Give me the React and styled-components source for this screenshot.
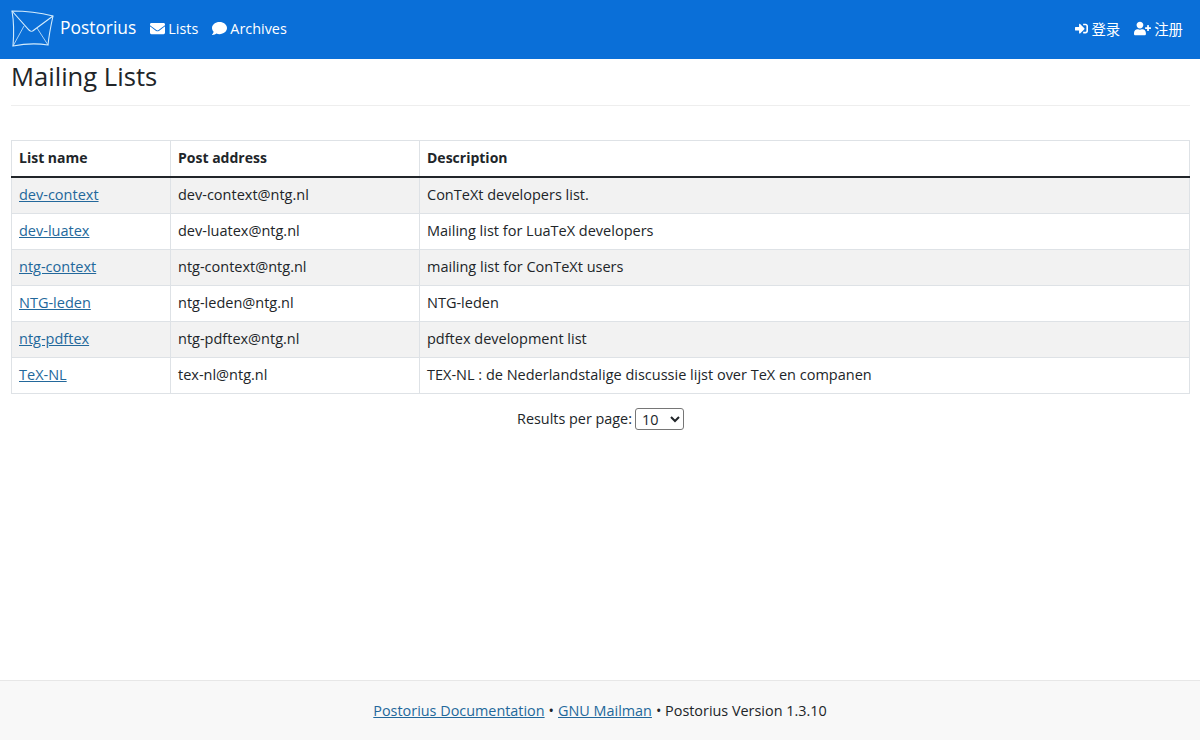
import React from "react"
import styled, { createGlobalStyle } from "styled-components"
import { FaEnvelope, FaComment, FaSignInAlt, FaUserPlus } from "react-icons/fa"

const GlobalStyle = createGlobalStyle`
  *, *::before, *::after {
    box-sizing: border-box;
  }
  html, body {
    margin: 0;
    height: 100%;
  }
  body {
    font-family: "Open Sans", "Noto Sans CJK SC", sans-serif;
    font-size: 14.4px;
    color: #212529;
    background: #fff;
  }
  #root {
    height: 100%;
  }
`

const Page = styled.div`
  display: flex;
  flex-direction: column;
  height: 740px;
  overflow: hidden;
`

const Navbar = styled.nav`
  display: flex;
  align-items: center;
  justify-content: space-between;
  height: 59px;
  padding: 0 17px 3px 11px;
  background: #0a6fd8;
  color: #fff;
`

const NavGroup = styled.div`
  display: flex;
  align-items: center;
  gap: 14px;
`

const Brand = styled.a`
  display: flex;
  align-items: center;
  gap: 6px;
  font-size: 17.4px;
  color: #fff;

  span {
    margin-bottom: 2px;
  }
`

const NavLink = styled.a`
  display: flex;
  align-items: center;
  gap: 3px;
  color: #fff;

  svg {
    width: ${props => props.$icon || 15}px;
    height: ${props => props.$icon || 15}px;
  }
`

const Main = styled.main`
  flex: 1;
  padding: 0 10px 0 11px;
`

const PageHeader = styled.div`
  padding: 0 0 8px;
  margin-bottom: 34px;
  border-bottom: 1px solid #eee;
`

const Title = styled.h1`
  margin: 0;
  height: 38px;
  font-size: 25.6px;
  font-weight: 400;
  line-height: 36px;
`

const Table = styled.table`
  width: 100%;
  table-layout: fixed;
  border-collapse: collapse;
`

const HeadCell = styled.th`
  height: 36px;
  padding: 0 7px 1px;
  border: 1px solid #dee2e6;
  border-bottom: 2px solid #212529;
  font-size: 14px;
  font-weight: 700;
  text-align: left;
  width: ${props => props.$width || "auto"};
`

const Cell = styled.td`
  height: 36px;
  padding: 0 7px 2px 7px;
  border: 1px solid #dee2e6;
  font-size: 14.5px;
`

const Row = styled.tr`
  background: ${props => (props.$odd ? "#f2f2f2" : "#fff")};

  &:first-child ${Cell} {
    height: 37px;
  }
`

const TextLink = styled.a`
  color: #23689b;
  text-decoration: underline;
`

const Pager = styled.div`
  display: flex;
  align-items: center;
  justify-content: center;
  gap: 3px;
  margin-top: 14px;
`

const PagerLabel = styled.span`
  margin-bottom: 2px;
`

const PerPage = styled.select`
  width: 49px;
  height: 22px;
  padding: 0 0 0 2px;
  font: inherit;
  color: #212529;
  background: #fff;
  border: 1px solid #767676;
  border-radius: 3px;
`

const Footer = styled.footer`
  display: flex;
  align-items: center;
  justify-content: center;
  gap: 4px;
  height: 60px;
  background: #f8f8f8;
  border-top: 1px solid #e7e7e7;
`

const Logo = () => (
  <svg width="43" height="37" viewBox="0 0 43 37" fill="none" stroke="#d4ecfc" strokeWidth="1.1">
    <path d="M1 1 C14 1 30 3 42 6 C40 15 38 25 37 35 C25 33 12 34 2 36 C3 24 3 12 1 1 Z" />
    <path d="M1 1 L18 20 C20 22 21 22 23 20 L42 6" />
    <path d="M2 36 L13 16 M37 35 L26 18" strokeWidth="0.8" />
  </svg>
)

const lists = [
  ["dev-context", "dev-context@ntg.nl", "ConTeXt developers list."],
  ["dev-luatex", "dev-luatex@ntg.nl", "Mailing list for LuaTeX developers"],
  ["ntg-context", "ntg-context@ntg.nl", "mailing list for ConTeXt users"],
  ["NTG-leden", "ntg-leden@ntg.nl", "NTG-leden"],
  ["ntg-pdftex", "ntg-pdftex@ntg.nl", "pdftex development list"],
  ["TeX-NL", "tex-nl@ntg.nl", "TEX-NL : de Nederlandstalige discussie lijst over TeX en companen"],
]

export default function App() {
  return (
    <Page>
      <GlobalStyle />
      <Navbar>
        <NavGroup>
          <Brand>
            <Logo />
            <span>Postorius</span>
          </Brand>
          <NavLink>
            <FaEnvelope />
            Lists
          </NavLink>
          <NavLink>
            <FaComment />
            Archives
          </NavLink>
        </NavGroup>
        <NavGroup>
          <NavLink $icon={13}>
            <FaSignInAlt />
            登录
          </NavLink>
          <NavLink $icon={17}>
            <FaUserPlus />
            注册
          </NavLink>
        </NavGroup>
      </Navbar>
      <Main>
        <PageHeader>
          <Title>Mailing Lists</Title>
        </PageHeader>
        <Table>
          <thead>
            <tr>
              <HeadCell $width="159px">List name</HeadCell>
              <HeadCell $width="249px">Post address</HeadCell>
              <HeadCell>Description</HeadCell>
            </tr>
          </thead>
          <tbody>
            {lists.map((list, i) => (
              <Row key={list[0]} $odd={i % 2 === 0}>
                <Cell>
                  <TextLink href="#">{list[0]}</TextLink>
                </Cell>
                <Cell>{list[1]}</Cell>
                <Cell>{list[2]}</Cell>
              </Row>
            ))}
          </tbody>
        </Table>
        <Pager>
          <PagerLabel>Results per page:</PagerLabel>
          <PerPage defaultValue="10">
            <option>10</option>
            <option>25</option>
            <option>50</option>
          </PerPage>
        </Pager>
      </Main>
      <Footer>
        <TextLink href="#">Postorius Documentation</TextLink>
        <span>•</span>
        <TextLink href="#">GNU Mailman</TextLink>
        <span>• Postorius Version 1.3.10</span>
      </Footer>
    </Page>
  )
}
